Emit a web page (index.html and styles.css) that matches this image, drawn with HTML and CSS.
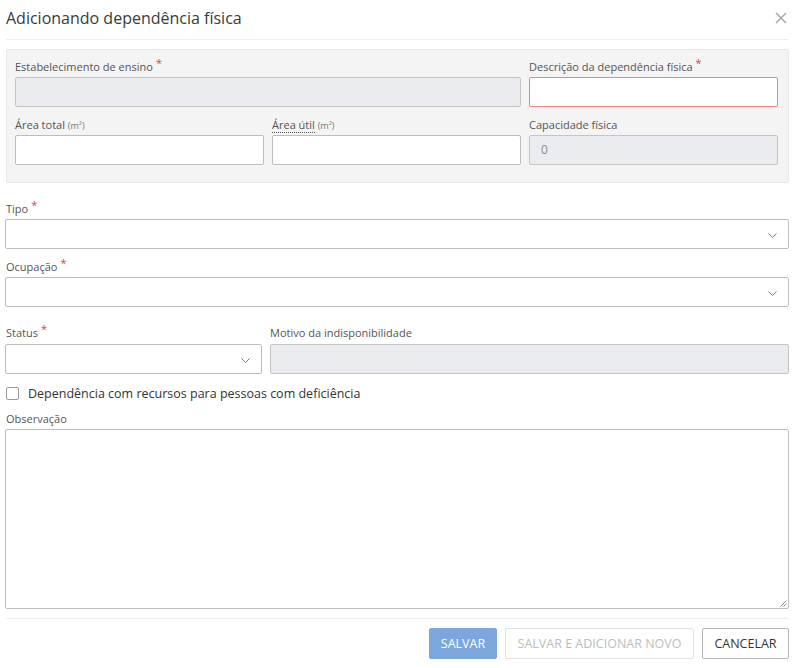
FILE: index.html
```html
<!DOCTYPE html>
<html lang="pt-BR">
<head>
<meta charset="utf-8">
<title>Adicionando dependência física</title>
<link rel="stylesheet" href="styles.css">
</head>
<body>
<div class="modal">
  <header class="modal-header">
    <h1 class="modal-title">Adicionando dependência física</h1>
    <button class="close" aria-label="Fechar">
      <svg width="12" height="12" viewBox="0 0 12 12"><path d="M1 1L11 11M11 1L1 11" stroke="#a8a8a8" stroke-width="1.5" fill="none"/></svg>
    </button>
  </header>

  <section class="panel">
    <div class="field span2">
      <label class="lbl">Estabelecimento de ensino<span class="req">*</span></label>
      <div class="input disabled"></div>
    </div>
    <div class="field">
      <label class="lbl">Descrição da dependência física<span class="req">*</span></label>
      <div class="input error"></div>
    </div>
    <div class="field">
      <label class="lbl">Área total <span class="unit">(m²)</span></label>
      <div class="input"></div>
    </div>
    <div class="field">
      <label class="lbl"><abbr class="abbr">Área útil</abbr> <span class="unit">(m²)</span></label>
      <div class="input"></div>
    </div>
    <div class="field">
      <label class="lbl">Capacidade física</label>
      <div class="input disabled value">0</div>
    </div>
  </section>

  <div class="field tipo">
    <label class="lbl">Tipo<span class="req">*</span></label>
    <div class="input select"><svg class="chev" width="9" height="5" viewBox="0 0 9 5"><path d="M0.5 0.5L4.5 4.5L8.5 0.5" stroke="#777" stroke-width="1" fill="none"/></svg></div>
  </div>
  <div class="field ocup">
    <label class="lbl">Ocupação<span class="req">*</span></label>
    <div class="input select"><svg class="chev" width="9" height="5" viewBox="0 0 9 5"><path d="M0.5 0.5L4.5 4.5L8.5 0.5" stroke="#777" stroke-width="1" fill="none"/></svg></div>
  </div>

  <div class="row status-row">
    <div class="field status">
      <label class="lbl">Status<span class="req">*</span></label>
      <div class="input select"><svg class="chev" width="9" height="5" viewBox="0 0 9 5"><path d="M0.5 0.5L4.5 4.5L8.5 0.5" stroke="#777" stroke-width="1" fill="none"/></svg></div>
    </div>
    <div class="field motivo">
      <label class="lbl">Motivo da indisponibilidade</label>
      <div class="input disabled"></div>
    </div>
  </div>

  <label class="check">
    <span class="box"></span>
    <span>Dependência com recursos para pessoas com deficiência</span>
  </label>

  <div class="field obs">
    <label class="lbl">Observação</label>
    <div class="input textarea">
      <svg class="grip" width="8" height="8" viewBox="0 0 8 8"><path d="M7.5 1.5L1.5 7.5M7.5 4.5L4.5 7.5" stroke="#888" stroke-width="1" fill="none"/></svg>
    </div>
  </div>

  <footer class="modal-footer">
    <button class="btn btn-primary">SALVAR</button>
    <button class="btn btn-disabled">SALVAR E ADICIONAR NOVO</button>
    <button class="btn btn-default">CANCELAR</button>
  </footer>
</div>
</body>
</html>
```

FILE: styles.css
```css
* { box-sizing: border-box; }
html, body { margin: 0; padding: 0; background: #fff; }
body {
  font-family: "Open Sans", "Noto Sans", sans-serif;
  color: #333;
}
.modal {
  width: 797px;
  padding: 0 8px 0 5px;
}
.modal-header {
  height: 40px;
  display: flex;
  align-items: center;
  justify-content: space-between;
  border-bottom: 1px solid #eeeeee;
  margin-left: 1px;
}
.modal-title {
  margin: 0;
  font-size: 16px;
  font-weight: 400;
  color: #3a3a3a;
  line-height: 22px;
  margin-top: -4px;
}
.close {
  border: 0;
  background: none;
  padding: 0;
  margin-right: 2px;
  margin-top: -4px;
  display: flex;
}
.panel {
  margin: 9px 0 18px 1px;
  background: #f4f4f4;
  border: 1px solid #e8e8e8;
  border-radius: 2px;
  padding: 9px 10px 17px 8px;
  display: grid;
  grid-template-columns: repeat(3, 1fr);
  column-gap: 8px;
  row-gap: 10px;
}
.span2 { grid-column: span 2; }
.field { display: flex; flex-direction: column; }
.lbl {
  font-size: 11px;
  line-height: 16px;
  height: 16px;
  color: #555;
  margin-bottom: 2px;
  white-space: nowrap;
}
.req {
  color: #e0413a;
  font-size: 11px;
  line-height: 0;
  position: relative;
  top: -4px;
  margin-left: 3px;
}
.unit { font-size: 9px; color: #777; line-height: 0; }
.abbr { text-decoration: none; border-bottom: 1px dotted #555; }
.input {
  height: 30px;
  border: 1px solid #bdbdbd;
  border-radius: 2px;
  background: #fff;
  position: relative;
}
.input.disabled { background: #ebecef; border-color: #c4c4c4; }
.input.error { border-color: #ee8484; }
.input.value {
  font-size: 12px;
  color: #888;
  padding-left: 11px;
  line-height: 28px;
}
.select .chev { position: absolute; right: 11px; top: 13px; }
.tipo { margin-bottom: 10px; }
.ocup { margin-bottom: 18px; }
.tipo .lbl, .ocup .lbl { padding-left: 1px; }
.row { display: flex; gap: 8px; }
.status { width: 257px; }
.motivo { flex: 1; }
.status-row .lbl { margin-bottom: 3px; }
.status .lbl { padding-left: 1px; }
.check {
  display: flex;
  align-items: center;
  gap: 9px;
  margin: 12px 0 0 1px;
  height: 14px;
  font-size: 12.5px;
  color: #333;
}
.box {
  width: 13px;
  height: 13px;
  border: 1px solid #9a9a9a;
  border-radius: 2px;
  background: #fff;
}
.obs { margin-top: 11px; }
.obs .lbl { padding-left: 1px; }
.textarea { height: 180px; }
.grip { position: absolute; right: 1px; bottom: 1px; }
.modal-footer {
  margin-top: 9px;
  margin-left: 1px;
  border-top: 1px solid #eeeeee;
  padding-top: 9px;
  display: flex;
  justify-content: flex-end;
  gap: 8px;
}
.btn {
  height: 31px;
  font-family: inherit;
  font-size: 12.5px;
  border-radius: 2px;
  padding: 0 12px;
  background: #fff;
  cursor: pointer;
}
.btn-primary {
  background: #7ba7dc;
  border: 1px solid #7ba7dc;
  color: #fff;
  width: 68px;
  padding: 0;
}
.btn-disabled {
  border: 1px solid #e2e2e2;
  color: #bdbdbd;
  width: 189px;
  padding: 0;
}
.btn-default {
  border: 1px solid #b5b5b5;
  color: #333;
  width: 87px;
  padding: 0;
}
```
